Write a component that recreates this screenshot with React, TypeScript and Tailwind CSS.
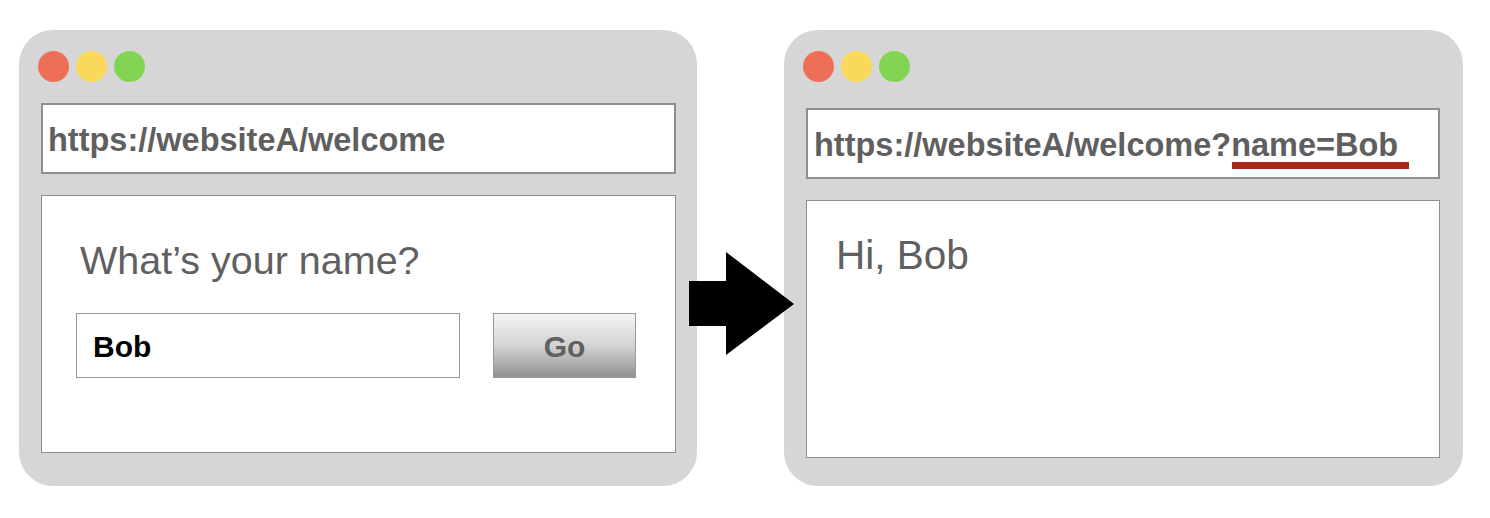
import React from "react";

const font = { fontFamily: '"Liberation Sans", Arial, Helvetica, sans-serif' };

function Lights() {
  return (
    <div className="flex gap-[7px] h-[31px] ml-[-3px]">
      <div className="w-[31px] h-[31px] rounded-full bg-[#ee6f58]" />
      <div className="w-[31px] h-[31px] rounded-full bg-[#f9d85b]" />
      <div className="w-[31px] h-[31px] rounded-full bg-[#84d454]" />
    </div>
  );
}

export default function App() {
  return (
    <div
      className="relative w-[1490px] h-[518px] bg-white flex items-start pl-[19px] pt-[30px] gap-[87px]"
      style={font}
    >
      {/* Left window */}
      <div className="w-[678px] h-[456px] rounded-[34px] bg-[#d6d6d6] pt-[21px] pl-[22px] pr-[21px] flex flex-col">
        <Lights />
        <div className="mt-[21px] h-[71px] border-2 border-[#8e8e8e] bg-white flex items-center pl-[5px] pt-[3px]">
          <span className="text-[32.5px] leading-[32.5px] font-bold text-[#5f5f5f] whitespace-nowrap">
            https://websiteA/welcome
          </span>
        </div>
        <div className="mt-[21px] h-[258px] border border-[#8e8e8e] bg-white flex flex-col pl-[34px] pt-[44px]">
          <div className="ml-[4px] text-[39.5px] leading-[40px] text-[#606060] whitespace-nowrap">
            What’s your name?
          </div>
          <div className="mt-[33px] flex gap-[33px]">
            <div className="w-[384px] h-[65px] border border-[#999999] bg-white flex items-center pl-[16px] pt-[2px]">
              <span className="text-[30px] leading-[30px] font-bold text-black">Bob</span>
            </div>
            <div className="w-[143px] h-[65px] border border-[#999999] bg-linear-to-b from-[#f5f5f5] via-[#d3d3d3] to-[#929292] flex items-center justify-center pt-[2px]">
              <span className="text-[30px] leading-[30px] font-bold text-[#606060]">Go</span>
            </div>
          </div>
        </div>
      </div>

      {/* Right window */}
      <div className="w-[679px] h-[456px] rounded-[34px] bg-[#d6d6d6] pt-[21px] pl-[22px] pr-[23px] flex flex-col">
        <Lights />
        <div className="mt-[26px] h-[71px] border-2 border-[#8e8e8e] bg-white flex items-center pl-[6px] pt-[3px]">
          <span className="text-[32.5px] leading-[32.5px] font-bold text-[#5f5f5f] whitespace-nowrap">
            https://websiteA/welcome?
            <span className="relative">
              name=Bob
              <span className="absolute left-[1px] -right-[11px] top-[35px] h-[7px] bg-[#a8291b]" />
            </span>
          </span>
        </div>
        <div className="mt-[21px] h-[258px] border border-[#8e8e8e] bg-white pl-[29px] pt-[34px]">
          <div className="text-[40.5px] leading-[41px] text-[#606060] whitespace-nowrap">Hi, Bob</div>
        </div>
      </div>

      {/* Arrow */}
      <svg
        className="absolute left-[689px] top-[252px]"
        width="105"
        height="103"
        viewBox="0 0 105 103"
      >
        <polygon points="0,29 37,29 37,0 105,52 37,103 37,74 0,74" fill="#000" />
      </svg>
    </div>
  );
}
